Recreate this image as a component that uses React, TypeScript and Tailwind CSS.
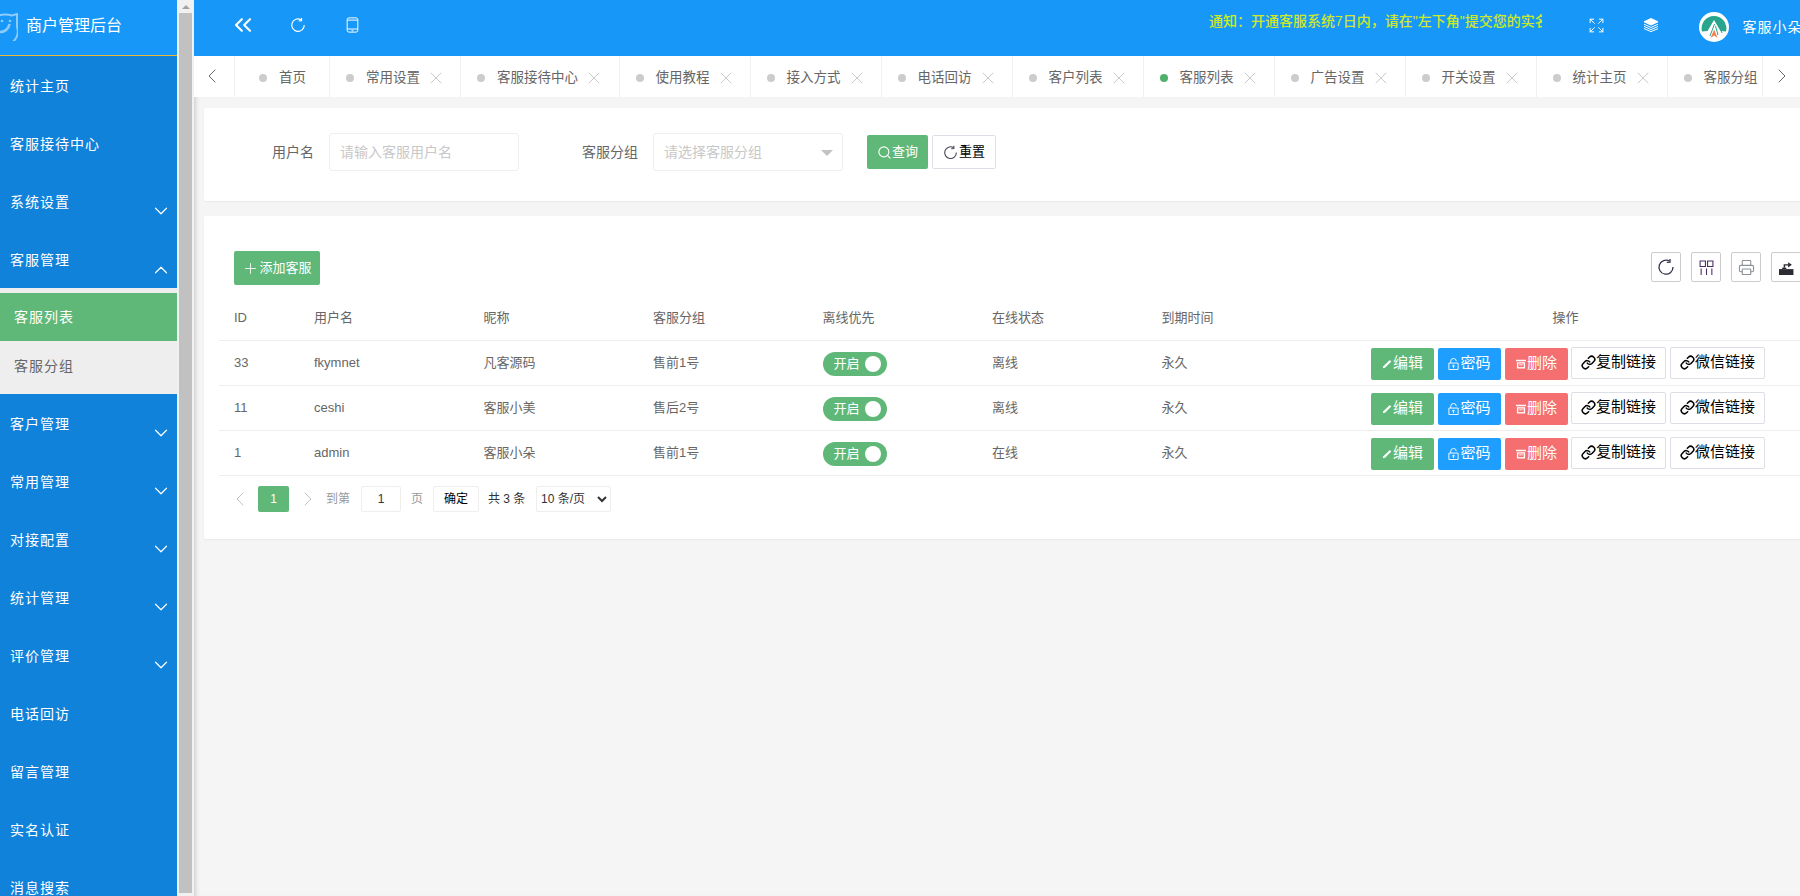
import { ChevronDown, ChevronLeft, ChevronRight, ChevronUp, ChevronsLeft, Expand, Link, Printer, Plus, Search, X } from 'lucide-react';

const tabs = ['常用设置', '客服接待中心', '使用教程', '接入方式', '电话回访', '客户列表', '客服列表', '广告设置', '开关设置', '统计主页'];

const rows = [
  { id: '33', user: 'fkymnet', nick: '凡客源码', group: '售前1号', online: '离线' },
  { id: '11', user: 'ceshi', nick: '客服小美', group: '售后2号', online: '离线' },
  { id: '1', user: 'admin', nick: '客服小朵', group: '售前1号', online: '在线' },
];

function Refresh({ className }: { className?: string }) {
  return (
    <svg viewBox="0 0 18 18" fill="none" stroke="currentColor" strokeWidth="1.3" className={className}>
      <path d="M12.6 3.2A7 7 0 1 0 16 9" />
      <path d="M13 1v3.2l-3.2.2" />
    </svg>
  );
}

function Sidebar() {
  const Item = ({ name, arrow }: { name: string; arrow?: 'down' | 'up' }) => (
    <div className="flex h-[58px] items-center justify-between pl-[10px] pr-[5px] pt-[2px] text-sm tracking-[1px] text-white">
      <span>{name}</span>
      {arrow === 'down' && <ChevronDown size={22} strokeWidth={1.3} className="mt-[18px]" />}
      {arrow === 'up' && <ChevronUp size={22} strokeWidth={1.3} className="mt-[19px]" />}
    </div>
  );

  return (
    <aside className="flex h-[896px] w-[194px] shrink-0 overflow-hidden">
      <div className="w-[177px] shrink-0 bg-[#1082d9]">
        <div className="flex h-[56px] items-center border-b border-[#e7b93a] bg-[#1797f7] pb-[4px]">
          <svg viewBox="0 0 18 28" fill="none" stroke="#8ccbfb" className="mt-[3px] h-[28px] w-[18px] shrink-0">
            <path d="M-4 3Q4 .5 12 2.500L17 1V14A13 13 0 0 1-8 23" strokeWidth="2" />
            <path d="M-1 19A9.500 9.500 0 0 0 9.500 11" strokeWidth="2.600" />
            <circle cx="2" cy="8" r="1.300" fill="#8ccbfb" stroke="none" />
            <circle cx="10" cy="8" r="1.300" fill="#8ccbfb" stroke="none" />
          </svg>
          <span className="ml-[8px] text-base text-white">商户管理后台</span>
        </div>
        <Item name="统计主页" />
        <Item name="客服接待中心" />
        <Item name="系统设置" arrow="down" />
        <Item name="客服管理" arrow="up" />
        <div className="bg-[#eeeeee] pt-[5px] text-sm tracking-[1px]">
          <div className="flex h-[48px] items-center bg-[#5fb878] pl-[14px] text-white">客服列表</div>
          <div className="flex h-[53px] items-center pb-[4px] pl-[14px] text-[#666666]">客服分组</div>
        </div>
        <Item name="客户管理" arrow="down" />
        <Item name="常用管理" arrow="down" />
        <Item name="对接配置" arrow="down" />
        <Item name="统计管理" arrow="down" />
        <Item name="评价管理" arrow="down" />
        <Item name="电话回访" />
        <Item name="留言管理" />
        <Item name="实名认证" />
        <Item name="消息搜索" />
      </div>
      <div className="w-[17px] shrink-0 bg-[#f1f1f1] px-[2px]">
        <div className="flex h-[13px] items-center justify-center">
          <div className="h-0 w-0 border-x-[4px] border-b-[4px] border-x-transparent border-b-[#a3a3a3]" />
        </div>
        <div className="h-[880px] bg-[#c1c1c1]" />
      </div>
    </aside>
  );
}

function Header() {
  return (
    <header className="flex h-[56px] shrink-0 items-center overflow-hidden bg-[#1797f7] pb-[6px] pl-[21px] text-white">
      <div className="flex w-[55px] shrink-0 justify-center">
        <ChevronsLeft size={28} strokeWidth={1.8} />
      </div>
      <div className="flex w-[55px] shrink-0 justify-center">
        <Refresh className="h-[16px] w-[16px]" />
      </div>
      <div className="flex w-[55px] shrink-0 justify-center">
        <svg viewBox="0 0 14 18" fill="none" stroke="currentColor" strokeWidth="1.1" className="h-[16px] w-[13px]">
          <rect x="1" y="1" width="12" height="16" rx="2" />
          <path d="M1 3.500h12M1 13.500h12M6 15.500h2" />
        </svg>
      </div>
      <div className="ml-[829px] w-[333px] shrink-0 -translate-y-[4px] overflow-hidden whitespace-nowrap text-sm font-medium text-[#cfe82a]">
        通知：开通客服系统7日内，请在"左下角"提交您的实名认证
      </div>
      <div className="ml-[26.500px] flex w-[55px] shrink-0 justify-center">
        <Expand size={17} strokeWidth={1.4} />
      </div>
      <div className="flex w-[55px] shrink-0 justify-center">
        <svg viewBox="0 0 16 14" fill="none" stroke="currentColor" strokeWidth="1" className="h-[14px] w-[16px]">
          <path d="M8 .5 15 3.800 8 7.100 1 3.800Z" fill="currentColor" />
          <path d="M1 6.200l7 3.300 7-3.300M1 8.400l7 3.200 7-3.200M1 10.600l7 3 7-3" />
        </svg>
      </div>
      <svg viewBox="0 0 30 30" className="ml-[20px] mt-[4px] h-[30px] w-[30px] shrink-0">
        <circle cx="15" cy="15" r="15" fill="#ffffff" />
        <path d="M3 19.500A12.400 12.400 0 1 1 27 19.500L21.500 19 15 8 8.500 19Z" fill="#28a58c" />
        <path d="M11 24 15.500 12M19 23l-2.500-9M23 21l-3-7" stroke="#28a58c" strokeWidth="1" fill="none" />
        <path d="M11.500 26 15.200 17.500 18.500 26 15.200 23.500Z" fill="#f5804a" />
      </svg>
      <span className="ml-[14px] mt-[4px] shrink-0 whitespace-nowrap text-sm tracking-[1px]">客服小朵</span>
    </header>
  );
}

function TabBar() {
  return (
    <div className="flex h-[41px] shrink-0 items-stretch overflow-hidden bg-white text-[13.500px] text-[#666666]">
      <div className="flex w-[41px] shrink-0 items-center justify-center border-r border-[#f0f0f0]">
        <ChevronLeft size={24} strokeWidth={1} className="-ml-1 -mt-[2px]" />
      </div>
      <div className="flex w-[95px] shrink-0 items-center border-r border-[#f0f0f0] pl-[24px] pt-[3px]">
        <span className="mr-[12px] h-[8px] w-[8px] rounded-full bg-[#cccccc]" />
        首页
      </div>
      {tabs.map((t) => (
        <div
          key={t}
          className={t === '客服接待中心' ? 'flex w-[158.500px] shrink-0 items-center border-r border-[#f0f0f0] pl-[16px] pt-[3px]' : 'flex w-[131px] shrink-0 items-center border-r border-[#f0f0f0] pl-[16px] pt-[3px]'}
        >
          <span className={t === '客服列表' ? 'mr-[12px] h-[8px] w-[8px] rounded-full bg-[#4fb06b]' : 'mr-[12px] h-[8px] w-[8px] rounded-full bg-[#cccccc]'} />
          <span className="whitespace-nowrap">{t}</span>
          <X size={20} strokeWidth={1} className="ml-[6px] text-[#c0c0c0]" />
        </div>
      ))}
      <div className="flex w-[95px] shrink-0 items-center border-r border-[#f0f0f0] pl-[16px] pt-[3px]">
        <span className="mr-[12px] h-[8px] w-[8px] rounded-full bg-[#cccccc]" />
        <span className="whitespace-nowrap">客服分组</span>
      </div>
      <div className="flex w-[38px] shrink-0 items-center justify-center">
        <ChevronRight size={24} strokeWidth={1} className="-mt-[2px]" />
      </div>
    </div>
  );
}

function SearchCard() {
  return (
    <div className="flex h-[93px] w-[1640px] items-center rounded-[2px] bg-white pb-[5px] shadow-[0_1px_2px_rgba(0,0,0,0.06)]">
      <label className="ml-[68px] w-[42px] text-sm text-[#666666]">用户名</label>
      <input
        placeholder="请输入客服用户名"
        className="ml-[15px] h-[38px] w-[190px] rounded-[3px] border border-[#eeeeee] px-[10px] text-sm outline-none placeholder:text-[#c8c8c8]"
      />
      <label className="ml-[63px] w-[56px] text-sm text-[#666666]">客服分组</label>
      <div className="ml-[15px] flex h-[38px] w-[190px] items-center justify-between rounded-[3px] border border-[#eeeeee] pl-[10px] pr-[9px] text-sm text-[#c8c8c8]">
        请选择客服分组
        <span className="mt-[1px] h-0 w-0 border-x-[6px] border-t-[6px] border-x-transparent border-t-[#c2c2c2]" />
      </div>
      <button className="ml-[24px] flex h-[34px] w-[61px] items-center justify-center rounded-[2px] bg-[#5fb878] text-[13px] text-white">
        <Search size={15} strokeWidth={1.8} />
        查询
      </button>
      <button className="ml-[4px] flex h-[34px] w-[64px] items-center justify-center rounded-[2px] border border-[#dcdfe6] text-[13px] text-black">
        <Refresh className="h-[15px] w-[15px] text-[#445]" />
        <span className="ml-px">重置</span>
      </button>
    </div>
  );
}

function TableCard() {
  return (
    <div className="mt-[15px] w-[1640px] rounded-[2px] bg-white pb-[27px] pl-[15px] pt-[35px] shadow-[0_1px_2px_rgba(0,0,0,0.06)]">
      <div className="ml-[15px] flex h-[34px] w-[1567px] items-start justify-between">
        <button className="flex h-[34px] w-[86px] items-center justify-center rounded-[2px] bg-[#5fb878] text-[13px] text-white">
          <Plus size={17} strokeWidth={1.2} />
          添加客服
        </button>
        <div className="mt-px flex gap-[10px]">
          <div className="flex h-[30px] w-[30px] items-center justify-center rounded-[2px] border border-[#cccccc] text-[#33334d]">
            <Refresh className="h-[18px] w-[18px]" />
          </div>
          <div className="flex h-[30px] w-[30px] items-center justify-center rounded-[2px] border border-[#cccccc] text-[#4b2a66]">
            <svg viewBox="0 0 14 14" fill="none" stroke="currentColor" strokeWidth="1" className="h-[15px] w-[15px]">
              <path d="M1 1h5v5H1zM8 1h5v5H8zM2 8v6M7 8v6M12 8v6" />
            </svg>
          </div>
          <div className="flex h-[30px] w-[30px] items-center justify-center rounded-[2px] border border-[#cccccc] text-[#8a8f98]">
            <Printer size={17} strokeWidth={1.5} />
          </div>
          <div className="flex h-[30px] w-[30px] items-center justify-center rounded-[2px] border border-[#cccccc] text-[#2b2b33]">
            <svg viewBox="0 0 14 14" className="h-[15px] w-[15px]" fill="currentColor">
              <path d="M0 8.500h13.500V14H0z" />
              <path d="M2.500 8.500 3.500 7h3L7 8.500z" />
              <path d="M5 7V4.500h4" fill="none" stroke="currentColor" strokeWidth="1.3" />
              <path d="M8.500 2 12 4.500 8.500 7z" />
            </svg>
          </div>
        </div>
      </div>

      <table className="mt-[10px] w-[1596px] table-fixed text-left text-[13px] text-[#666666]">
        <colgroup>
          <col className="w-[80px]" />
          <col className="w-[169.500px]" />
          <col className="w-[169.500px]" />
          <col className="w-[169.500px]" />
          <col className="w-[169.500px]" />
          <col className="w-[169.500px]" />
          <col className="w-[169.500px]" />
          <col className="w-[499px]" />
        </colgroup>
        <thead>
          <tr className="h-[45px] border-b border-[#eeeeee]">
            <th className="px-[15px] font-normal">ID</th>
            <th className="px-[15px] font-normal">用户名</th>
            <th className="px-[15px] font-normal">昵称</th>
            <th className="px-[15px] font-normal">客服分组</th>
            <th className="px-[15px] font-normal">离线优先</th>
            <th className="px-[15px] font-normal">在线状态</th>
            <th className="px-[15px] font-normal">到期时间</th>
            <th className="text-center font-normal">操作</th>
          </tr>
        </thead>
        <tbody>
          {rows.map((r) => (
            <tr key={r.id} className="h-[45px] border-b border-[#eeeeee]">
              <td className="px-[15px]">{r.id}</td>
              <td className="px-[15px]">{r.user}</td>
              <td className="px-[15px]">{r.nick}</td>
              <td className="px-[15px]">{r.group}</td>
              <td className="px-[15px]">
                <div className="mt-[3px] flex h-[24px] w-[64px] items-center justify-between rounded-full bg-[#5fb878] pl-[11px] pr-[6px] text-white">
                  开启
                  <span className="h-[16px] w-[16px] rounded-full bg-white" />
                </div>
              </td>
              <td className="px-[15px]">{r.online}</td>
              <td className="px-[15px]">永久</td>
              <td>
                <div className="ml-[55px] mt-[2px] flex items-center text-[15px]">
                  <button className="flex h-[32px] w-[63px] items-center justify-center gap-[1px] rounded-[2px] bg-[#5fb878] text-white">
                    <svg viewBox="0 0 10 10" className="h-[10px] w-[10px]" fill="currentColor">
                      <path d="M7.800 1 9.300 2.500 3 8.800 0.800 9.300 1.400 7.300Z" />
                    </svg>
                    编辑
                  </button>
                  <button className="ml-[4px] flex h-[32px] w-[63px] items-center justify-center gap-[1px] rounded-[2px] bg-[#1e9fff] text-white">
                    <svg viewBox="0 0 11 13" fill="none" stroke="currentColor" className="h-[12px] w-[11px]">
                      <path d="M.500 5.500h10v7h-10zM2.500 5.500V3.500a3 3 0 0 1 6 0M5.500 11V8M4 9l1.500-1.500L7 9" />
                    </svg>
                    密码
                  </button>
                  <button className="ml-[4px] flex h-[32px] w-[63px] items-center justify-center gap-[1px] rounded-[2px] bg-[#f56e70] text-white">
                    <svg viewBox="0 0 11 11" fill="currentColor" className="h-[11px] w-[10px]">
                      <path d="M0 1.500h11v1.500H0zM1 4h9v7H1z" />
                      <path d="M2.500 5.500h6v4h-6z" fill="#f56e70" />
                      <path d="M3.500 6.500h4v1h-4z" />
                    </svg>
                    删除
                  </button>
                  <button className="ml-[3px] -mt-[2px] flex h-[32px] w-[95px] items-center justify-center rounded-[2px] border border-[#dcdfe6] text-black">
                    <Link size={15} strokeWidth={2.4} />
                    复制链接
                  </button>
                  <button className="ml-[4px] -mt-[2px] flex h-[32px] w-[95px] items-center justify-center rounded-[2px] border border-[#dcdfe6] text-black">
                    <Link size={15} strokeWidth={2.4} />
                    微信链接
                  </button>
                </div>
              </td>
            </tr>
          ))}
        </tbody>
      </table>

      <div className="ml-[15px] mt-[10px] flex h-[26px] items-center text-xs text-[#333333]">
        <div className="flex w-[24px] items-center text-[#c2c2c2]">
          <ChevronLeft size={24} strokeWidth={1} className="-ml-[6px]" />
        </div>
        <div className="flex h-[26px] w-[31px] items-center justify-center rounded-[2px] bg-[#5fb878] text-white">1</div>
        <div className="flex w-[37px] justify-center text-[#c2c2c2]">
          <ChevronRight size={24} strokeWidth={1} />
        </div>
        <span className="w-[24px] text-[#999999]">到第</span>
        <input
          defaultValue="1"
          className="ml-[11px] h-[26px] w-[40px] rounded-[2px] border border-[#eeeeee] text-center text-xs outline-none"
        />
        <span className="ml-[10px] w-[12px] text-[#999999]">页</span>
        <button className="ml-[10px] h-[26px] w-[46px] rounded-[2px] border border-[#eeeeee] text-xs text-black">确定</button>
        <span className="ml-[9px] w-[38px] whitespace-nowrap">共 3 条</span>
        <select defaultValue="10" className="ml-[10px] h-[26px] w-[75px] rounded-[2px] border border-[#eeeeee] bg-white text-xs text-[#333333] outline-none">
          <option value="10">10 条/页</option>
          <option value="20">20 条/页</option>
        </select>
      </div>
    </div>
  );
}

export default function App() {
  return (
    <div className="flex h-[896px] w-[1800px] overflow-hidden bg-[#f5f5f5] font-['Liberation_Sans','Noto_Sans_CJK_SC',sans-serif]">
      <Sidebar />
      <main className="flex min-w-0 flex-1 flex-col">
        <Header />
        <TabBar />
        <div className="flex-1 overflow-hidden pl-[10px] pt-[11px] shadow-[inset_5px_0_4px_-3px_rgba(0,0,0,0.15)]">
          <SearchCard />
          <TableCard />
        </div>
      </main>
    </div>
  );
}
